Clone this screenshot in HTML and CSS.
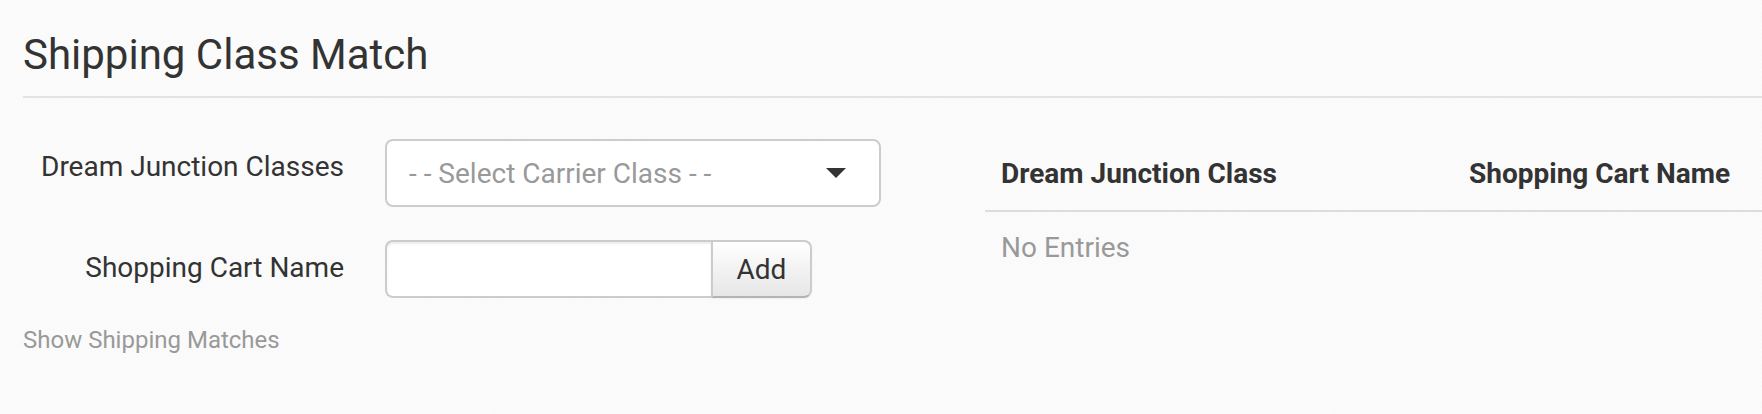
FILE: index.html
```html
<!DOCTYPE html>
<html lang="en">
<head>
    <meta charset="UTF-8">
    <meta name="viewport" content="width=device-width, initial-scale=1.0">
    <title>Shipping Class Match</title>
    <link rel="stylesheet" href="styles.css">
</head>
<body>
    <div class="page">
        <h1 class="title">Shipping Class Match</h1>

        <div class="content">
            <form class="match-form" id="matchForm">
                <div class="field">
                    <label class="field-label" for="carrierClass">Dream Junction Classes</label>
                    <div class="select" id="carrierClass">
                        <span class="select-text">- - Select Carrier Class - -</span>
                        <svg class="caret" width="20" height="10" viewBox="0 0 20 10">
                            <polygon points="0,0 20,0 10,10" fill="#333"></polygon>
                        </svg>
                    </div>
                </div>

                <div class="field">
                    <label class="field-label" for="cartName">Shopping Cart Name</label>
                    <div class="input-group">
                        <input type="text" class="text-input" id="cartName" name="cartName">
                        <button type="button" class="btn">Add</button>
                    </div>
                </div>

                <a class="show-link" href="#">Show Shipping Matches</a>
            </form>

            <div class="matches">
                <table class="match-table">
                    <thead>
                        <tr>
                            <th class="col-class">Dream Junction Class</th>
                            <th>Shopping Cart Name</th>
                        </tr>
                    </thead>
                    <tbody>
                        <!-- rows go here -->
                        <tr>
                            <td class="empty" colspan="2">No Entries</td>
                        </tr>
                    </tbody>
                </table>
            </div>
        </div>
    </div>
</body>
</html>
```

FILE: styles.css
```css
html, body {
    margin: 0;
    overflow: hidden;
}

body {
    background-color: #fbfbfb;
    background-image: repeating-linear-gradient(135deg, rgba(0, 0, 0, 0.008) 0, rgba(0, 0, 0, 0.008) 1px, transparent 1px, transparent 3px);
    color: #333;
    font-family: Roboto, "Liberation Sans", Arial, sans-serif;
    font-size: 28px;
}

.page {
    padding-left: 23px;
    padding-top: 32px;
    height: 382px;
}

.title {
    margin: 0;
    font-size: 42px;
    font-weight: 400;
    line-height: 46px;
    padding-bottom: 18px;
    border-bottom: 2px solid #e3e3e3;
}

.content {
    display: flex;
    padding-top: 41px;
}

/* left side, the form */
.match-form {
    width: 962px;
    margin: 0;
}

.field {
    display: flex;
    align-items: flex-start;
    margin-bottom: 33px;
}

.field-label {
    width: 321px;
    margin-right: 41px;
    padding-top: 8px;
    text-align: right;
    line-height: 40px;
}

.select {
    box-sizing: border-box;
    width: 496px;
    height: 68px;
    display: flex;
    align-items: center;
    justify-content: space-between;
    padding: 0 33px 0 22px;
    background: #fff;
    border: 2px solid #ccc;
    border-radius: 8px;
    line-height: 40px;
}

.select-text {
    color: #999;
    padding-top: 2px;
}

.caret {
    display: block;
}

.input-group {
    display: flex;
    height: 58px;
}

.text-input {
    box-sizing: border-box;
    width: 326px;
    height: 58px;
    margin: 0;
    padding: 0 16px;
    border: 2px solid #ccc;
    border-right: none;
    border-radius: 8px 0 0 8px;
    background: #fff;
    box-shadow: inset 0 2px 2px rgba(0, 0, 0, 0.075);
    font-family: inherit;
    font-size: 28px;
    color: #555;
    outline: none;
}

.btn {
    box-sizing: border-box;
    width: 101px;
    height: 58px;
    margin: 0;
    padding: 2px 0 0;
    border: 2px solid #ccc;
    border-bottom-color: #b3b3b3;
    border-radius: 0 8px 8px 0;
    background: linear-gradient(to bottom, #ffffff, #e6e6e6);
    box-shadow: inset 0 2px 0 rgba(255, 255, 255, 0.2), 0 1px 2px rgba(0, 0, 0, 0.05);
    color: #333;
    font-family: inherit;
    font-size: 28px;
    line-height: 40px;
    text-align: center;
    cursor: pointer;
}

.show-link {
    display: block;
    margin-top: -8px;
    font-size: 24px;
    line-height: 34px;
    color: #999;
    text-decoration: none;
}

/* right side, the table */
.matches {
    flex: 1;
}

.match-table {
    width: 100%;
    border-collapse: collapse;
}

.match-table th {
    padding: 15px 16px 16px;
    text-align: left;
    font-weight: 700;
    line-height: 40px;
    border-bottom: 2px solid #ddd;
}

.match-table .col-class {
    width: 436px;
}

.match-table td {
    padding: 16px 16px 14px;
    line-height: 40px;
}

.empty {
    color: #999;
}
```
